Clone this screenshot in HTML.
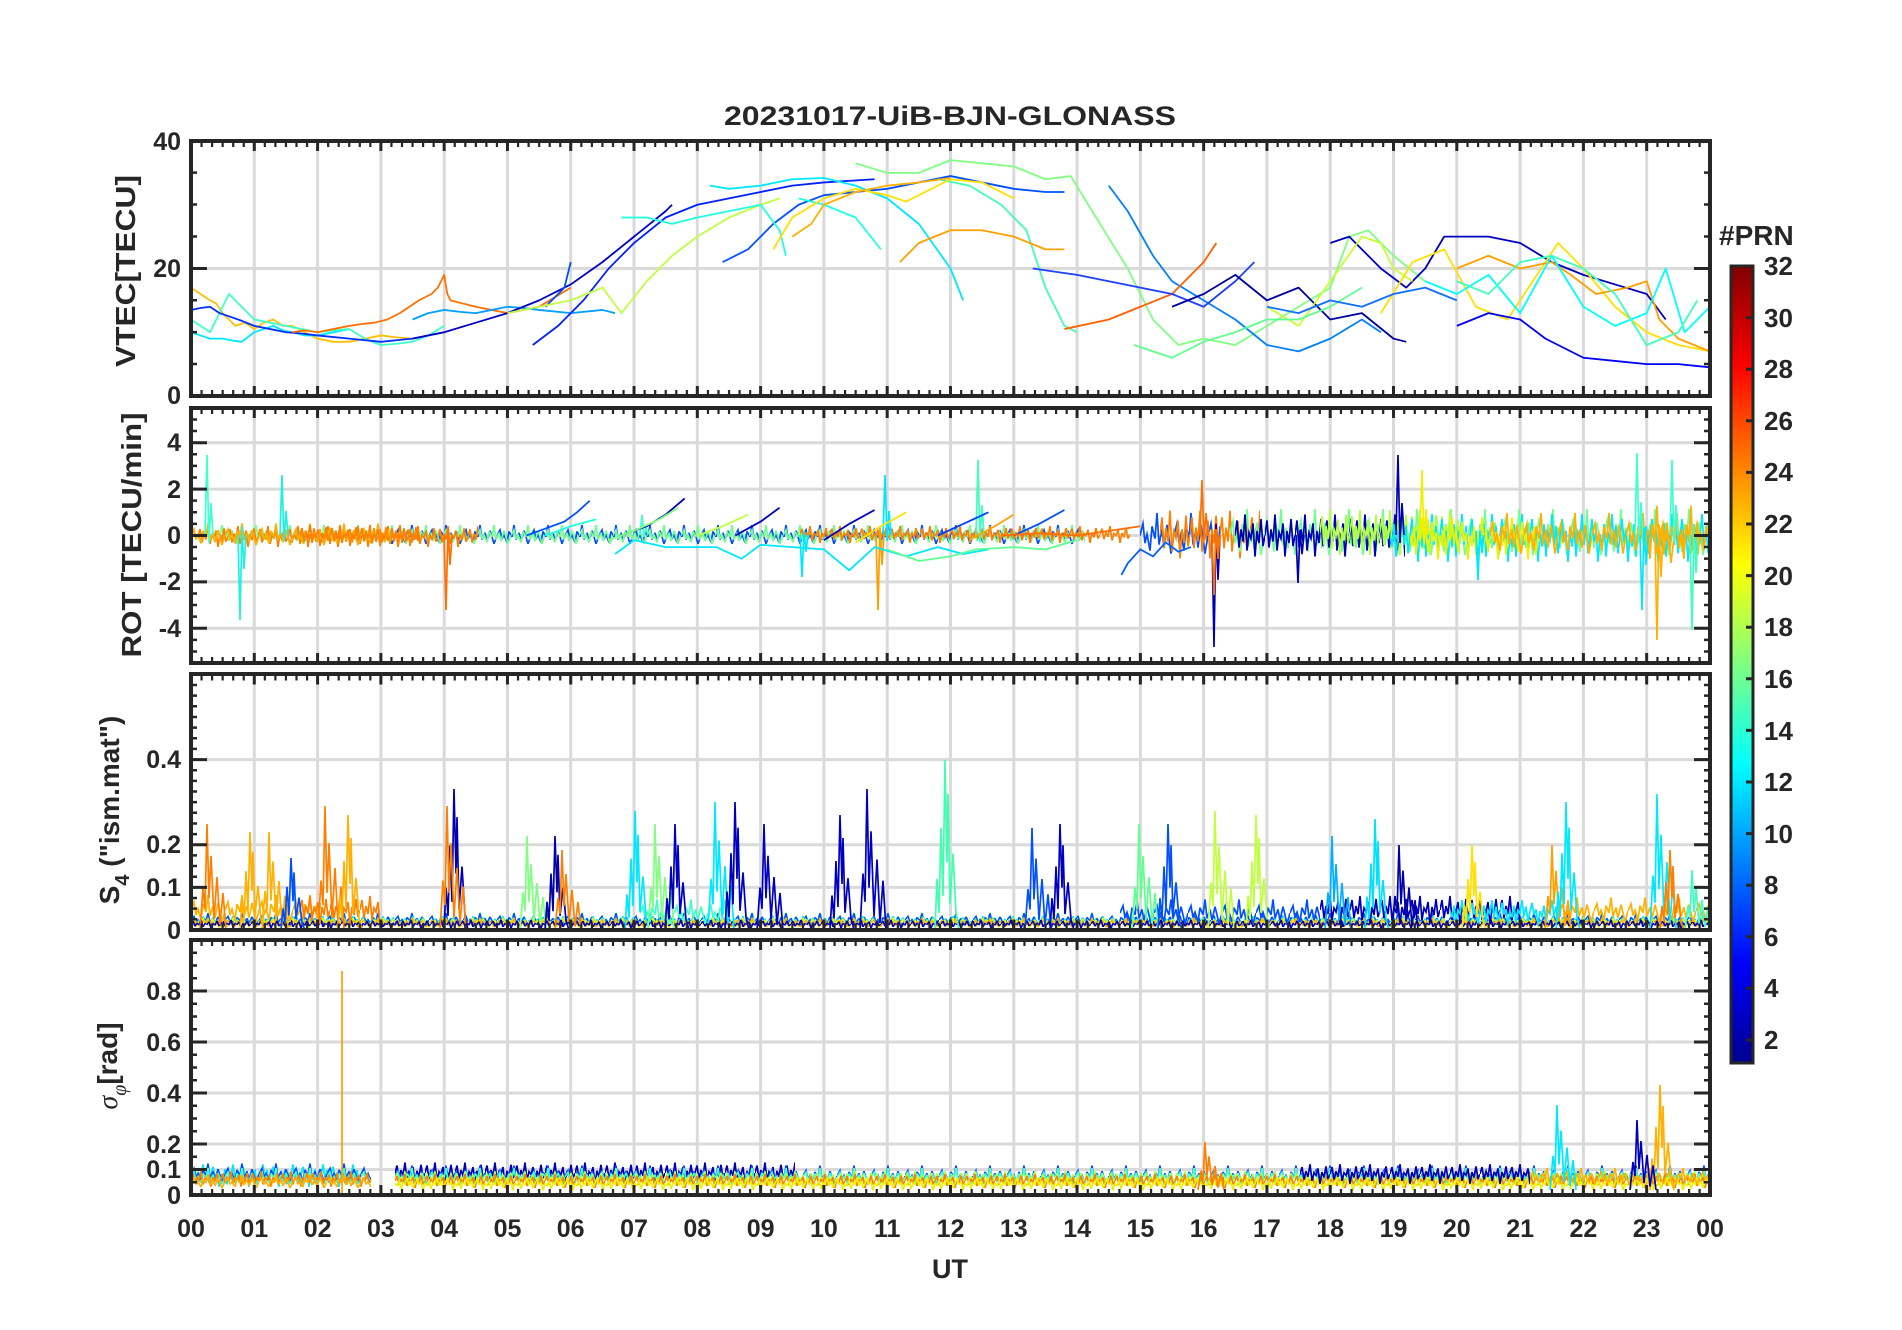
<!DOCTYPE html>
<html><head><meta charset="utf-8"><style>
html,body{margin:0;padding:0;background:#fff;}
svg{display:block;font-family:"Liberation Sans",sans-serif;font-weight:bold;}
</style></head><body>
<svg width="1902" height="1330" viewBox="0 0 1902 1330" xmlns="http://www.w3.org/2000/svg">
<defs>
<linearGradient id="jet" x1="0" y1="1" x2="0" y2="0">
<stop offset="0" stop-color="#00008f"/><stop offset="0.125" stop-color="#0000ff"/><stop offset="0.375" stop-color="#00ffff"/><stop offset="0.625" stop-color="#ffff00"/><stop offset="0.875" stop-color="#ff0000"/><stop offset="1" stop-color="#800000"/>
</linearGradient>
<pattern id="pO" patternUnits="userSpaceOnUse" width="30" height="40"><polyline fill="none" stroke="#ff8000" stroke-width="1.7" points="0,20 2,10 4,28 6,16 8,24 10,6 12,30 14,18 16,22 18,12 20,34 22,17 24,25 26,9 28,27 30,20"/></pattern>
<pattern id="pA" patternUnits="userSpaceOnUse" width="34" height="40"><polyline fill="none" stroke="#ffb000" stroke-width="1.7" points="0,20 3,12 5,25 7,19 10,30 12,14 15,22 17,5 19,26 22,16 24,28 27,13 29,22 31,32 34,20"/></pattern>
<pattern id="pY" patternUnits="userSpaceOnUse" width="30" height="40"><polyline fill="none" stroke="#eef000" stroke-width="1.7" points="0,20 2,27 4,14 6,33 8,19 10,23 12,8 14,26 16,15 18,31 20,21 22,11 24,24 26,18 28,36 30,20"/></pattern>
<pattern id="pG" patternUnits="userSpaceOnUse" width="34" height="40"><polyline fill="none" stroke="#70ff90" stroke-width="1.7" points="0,20 3,12 5,25 7,19 10,30 12,14 15,22 17,5 19,26 22,16 24,28 27,13 29,22 31,32 34,20"/></pattern>
<pattern id="pL" patternUnits="userSpaceOnUse" width="30" height="40"><polyline fill="none" stroke="#b0ff40" stroke-width="1.7" points="0,20 2,10 4,28 6,16 8,24 10,6 12,30 14,18 16,22 18,12 20,34 22,17 24,25 26,9 28,27 30,20"/></pattern>
<pattern id="pC" patternUnits="userSpaceOnUse" width="30" height="40"><polyline fill="none" stroke="#00e8ff" stroke-width="1.7" points="0,20 2,27 4,14 6,33 8,19 10,23 12,8 14,26 16,15 18,31 20,21 22,11 24,24 26,18 28,36 30,20"/></pattern>
<pattern id="pT" patternUnits="userSpaceOnUse" width="34" height="40"><polyline fill="none" stroke="#40ffc8" stroke-width="1.7" points="0,20 3,12 5,25 7,19 10,30 12,14 15,22 17,5 19,26 22,16 24,28 27,13 29,22 31,32 34,20"/></pattern>
<pattern id="pB" patternUnits="userSpaceOnUse" width="34" height="40"><polyline fill="none" stroke="#0050ff" stroke-width="1.7" points="0,20 3,12 5,25 7,19 10,30 12,14 15,22 17,5 19,26 22,16 24,28 27,13 29,22 31,32 34,20"/></pattern>
<pattern id="pD" patternUnits="userSpaceOnUse" width="30" height="40"><polyline fill="none" stroke="#0000b8" stroke-width="1.7" points="0,20 2,10 4,28 6,16 8,24 10,6 12,30 14,18 16,22 18,12 20,34 22,17 24,25 26,9 28,27 30,20"/></pattern>
<polyline id="b1" fill="none" vector-effect="non-scaling-stroke" stroke-width="1.7" points="0,0 3,-0.4 5,-0.2 7,-1 9,-0.3 11,-0.7 14,-0.1 17,-0.5 20,-0.05 23,-0.35 26,0"/>
<polyline id="b2" fill="none" vector-effect="non-scaling-stroke" stroke-width="1.7" points="0,0 2,-0.3 4,-0.1 6,-0.6 8,-0.2 10,-1 12,-0.4 13,-0.8 15,-0.15 18,-0.45 21,-0.1 24,0"/>
<polyline id="sp" fill="none" vector-effect="non-scaling-stroke" stroke-width="1.7" points="0,0 2,-1 4,0.1 6,-0.4 8,0"/>
<clipPath id="c2"><rect x="191" y="408" width="1519" height="255"/></clipPath>
<clipPath id="c3"><rect x="191" y="674" width="1519" height="256"/></clipPath>
<clipPath id="c4"><rect x="191" y="940" width="1519" height="255"/></clipPath>
</defs>

<!-- gridlines -->
<g stroke="#dadada" stroke-width="3">
<g id="vg">
<line x1="254.3" y1="141" x2="254.3" y2="396"/><line x1="317.6" y1="141" x2="317.6" y2="396"/><line x1="380.9" y1="141" x2="380.9" y2="396"/><line x1="444.2" y1="141" x2="444.2" y2="396"/><line x1="507.5" y1="141" x2="507.5" y2="396"/><line x1="570.7" y1="141" x2="570.7" y2="396"/><line x1="634" y1="141" x2="634" y2="396"/><line x1="697.3" y1="141" x2="697.3" y2="396"/><line x1="760.6" y1="141" x2="760.6" y2="396"/><line x1="823.9" y1="141" x2="823.9" y2="396"/><line x1="887.2" y1="141" x2="887.2" y2="396"/><line x1="950.5" y1="141" x2="950.5" y2="396"/><line x1="1013.8" y1="141" x2="1013.8" y2="396"/><line x1="1077.1" y1="141" x2="1077.1" y2="396"/><line x1="1140.4" y1="141" x2="1140.4" y2="396"/><line x1="1203.6" y1="141" x2="1203.6" y2="396"/><line x1="1266.9" y1="141" x2="1266.9" y2="396"/><line x1="1330.2" y1="141" x2="1330.2" y2="396"/><line x1="1393.5" y1="141" x2="1393.5" y2="396"/><line x1="1456.8" y1="141" x2="1456.8" y2="396"/><line x1="1520.1" y1="141" x2="1520.1" y2="396"/><line x1="1583.4" y1="141" x2="1583.4" y2="396"/><line x1="1646.7" y1="141" x2="1646.7" y2="396"/>
</g>
<use href="#vg" transform="translate(0,267)"/>
<use href="#vg" transform="translate(0,533)"/>
<use href="#vg" transform="translate(0,799)"/>
<line x1="191" y1="268.5" x2="1710" y2="268.5"/>
<line x1="191" y1="442.7" x2="1710" y2="442.7"/><line x1="191" y1="489.1" x2="1710" y2="489.1"/><line x1="191" y1="535.5" x2="1710" y2="535.5"/><line x1="191" y1="581.9" x2="1710" y2="581.9"/><line x1="191" y1="628.3" x2="1710" y2="628.3"/>
<line x1="191" y1="887.4" x2="1710" y2="887.4"/><line x1="191" y1="844.8" x2="1710" y2="844.8"/><line x1="191" y1="759.6" x2="1710" y2="759.6"/>
<line x1="191" y1="1169.5" x2="1710" y2="1169.5"/><line x1="191" y1="1144" x2="1710" y2="1144"/><line x1="191" y1="1093" x2="1710" y2="1093"/><line x1="191" y1="1042" x2="1710" y2="1042"/><line x1="191" y1="991" x2="1710" y2="991"/>
</g>

<!-- Panel 1 VTEC -->
<svg x="191" y="141" width="1519" height="255" viewBox="0 -40 24 40" preserveAspectRatio="none" overflow="hidden">
<g fill="none" stroke-width="1.8" stroke-linejoin="round">
<polyline vector-effect="non-scaling-stroke" stroke="#ffc000" points="0,-17 0.15,-16 0.3,-15 0.4,-14.5 0.5,-13 0.6,-12 0.7,-11 0.85,-11.5 1,-10.5 1.15,-11.5 1.3,-12 1.45,-11 1.6,-11 1.8,-10 2,-9 2.25,-8.5 2.5,-8.5 2.75,-9 3,-9.5 3.25,-9.2 3.5,-9"/>
<polyline vector-effect="non-scaling-stroke" stroke="#00e8ff" points="0,-10 0.15,-9.5 0.3,-9 0.5,-9 0.65,-8.7 0.8,-8.5 1,-10 1.15,-10.5 1.3,-11 1.45,-10.3 1.6,-10 1.8,-9.5 2,-9.5 2.25,-10 2.5,-10.5"/>
<polyline vector-effect="non-scaling-stroke" stroke="#40ffc8" points="0,-12 0.15,-11 0.3,-10 0.45,-13 0.6,-16 0.7,-15 0.8,-14 0.9,-13 1,-12 1.25,-11.5 1.5,-11 1.75,-10.5 2,-10 2.25,-10.3 2.5,-10.5 2.75,-9 3,-8 3.25,-8.2 3.5,-8.5 3.75,-9.5 4,-11"/>
<polyline vector-effect="non-scaling-stroke" stroke="#0030ff" points="0,-13.5 0.15,-13.8 0.3,-14 0.45,-13 0.6,-12.5 0.8,-11.8 1,-11 1.25,-10.5 1.5,-10 1.75,-9.8 2,-9.5 2.5,-9 3,-8.5 3.5,-9 4,-10"/>
<polyline vector-effect="non-scaling-stroke" stroke="#ff7000" points="1.6,-10 1.8,-10.3 2,-10 2.25,-10.5 2.5,-11 2.7,-11.3 2.9,-11.5 3.1,-12 3.3,-13 3.45,-14 3.6,-15 3.8,-16 3.9,-17 4,-19 4.05,-16 4.1,-15 4.3,-14.5 4.5,-14 4.75,-13.5 5,-13 5.25,-13.5 5.5,-14 5.75,-15.5 6,-17"/>
<polyline vector-effect="non-scaling-stroke" stroke="#00a0ff" points="3.5,-12 3.75,-13 4,-13.5 4.25,-13.2 4.5,-13 4.75,-13.5 5,-14 5.25,-13.8 5.5,-13.5 6,-13 6.5,-13.5 6.7,-13"/>
<polyline vector-effect="non-scaling-stroke" stroke="#0000c8" points="3.5,-9 4,-10 4.5,-11.5 5,-13 5.5,-15 6,-17.5 6.5,-21 7,-25 7.5,-29 7.6,-30"/>
<polyline vector-effect="non-scaling-stroke" stroke="#0020ff" points="5.4,-8 5.8,-11 6.2,-15 6.6,-20 7,-24 7.5,-28 8,-30 8.5,-31 9,-32 9.5,-33 10,-33.5 10.8,-34"/>
<polyline vector-effect="non-scaling-stroke" stroke="#0050ff" points="5.6,-14 5.9,-17 6,-21"/>
<polyline vector-effect="non-scaling-stroke" stroke="#c0ff40" points="5,-13 5.5,-14 6,-15 6.5,-17 6.8,-13 7.2,-18 7.6,-22 8,-25 8.5,-28 9,-30 9.3,-31"/>
<polyline vector-effect="non-scaling-stroke" stroke="#0050ff" points="8.4,-21 8.8,-23 9.2,-27 9.6,-30 10,-31.5 10.5,-32 11,-32.5 11.5,-33.5 12,-34.5 12.5,-33.5 13,-32.5 13.5,-32 13.8,-32"/>
<polyline vector-effect="non-scaling-stroke" stroke="#00e8ff" points="8.2,-33 8.5,-32.5 9,-33 9.5,-34 10,-34.2 10.5,-33 11,-31 11.5,-27 12,-20 12.2,-15"/>
<polyline vector-effect="non-scaling-stroke" stroke="#20ffe0" points="6.8,-28 7.2,-28 7.6,-27 8,-28 8.5,-29 9,-30 9.3,-26 9.4,-22"/>
<polyline vector-effect="non-scaling-stroke" stroke="#20ffe0" points="9.6,-31 10,-30 10.5,-28 10.9,-23"/>
<polyline vector-effect="non-scaling-stroke" stroke="#80ff80" points="10.5,-36.5 11,-35 11.5,-35 12,-37 12.5,-36.5 13,-36 13.5,-34 13.9,-34.5 14.3,-28 14.8,-20 15.2,-12 15.6,-8 16,-9 16.5,-8 17,-11 17.5,-14 18,-17 18.3,-25 18.6,-26 19,-22 19.5,-18"/>
<polyline vector-effect="non-scaling-stroke" stroke="#40ffb0" points="11.8,-34 12.3,-33 12.8,-30 13.2,-26 13.5,-17 13.8,-11 14,-10"/>
<polyline vector-effect="non-scaling-stroke" stroke="#ffa000" points="11.2,-21 11.5,-24 12,-26 12.5,-26 13,-25 13.5,-23 13.8,-23"/>
<polyline vector-effect="non-scaling-stroke" stroke="#ffe000" points="9.2,-23 9.5,-28 10,-31 10.5,-32.5 11,-31.5 11.3,-30.5 11.8,-33 12,-34 12.5,-33.5 13,-31"/>
<polyline vector-effect="non-scaling-stroke" stroke="#ffb000" points="9.5,-25 9.8,-27 10,-30 10.5,-32 11,-33 11.5,-33.5 12,-34.2"/>
<polyline vector-effect="non-scaling-stroke" stroke="#0080ff" points="14.5,-33 14.8,-29 15.2,-22 15.5,-18 16,-15 16.5,-12 17,-8 17.5,-7 18,-9 18.5,-12 18.8,-10"/>
<polyline vector-effect="non-scaling-stroke" stroke="#ff6000" points="13.8,-10.5 14.5,-12 15,-14 15.5,-16 16,-21 16.2,-24"/>
<polyline vector-effect="non-scaling-stroke" stroke="#2040ff" points="13.3,-20 14,-19 14.5,-18 15,-17 15.5,-16 16,-14 16.5,-18 16.8,-21"/>
<polyline vector-effect="non-scaling-stroke" stroke="#0000a0" points="15.5,-14 16,-16 16.5,-19 17,-15 17.5,-17 18,-12 18.5,-13 19,-9 19.2,-8.5"/>
<polyline vector-effect="non-scaling-stroke" stroke="#0000c0" points="18,-24 18.3,-25 18.8,-20 19.2,-17 19.5,-20 19.8,-25 20.5,-25 21,-24 21.5,-21 22,-19 22.5,-17.5 23,-16 23.3,-12"/>
<polyline vector-effect="non-scaling-stroke" stroke="#c8ff30" points="17,-14 17.5,-11 18,-18 18.5,-25 18.8,-24 19,-20 19.3,-18"/>
<polyline vector-effect="non-scaling-stroke" stroke="#ffe000" points="18.8,-13 19.3,-21 19.8,-23 20.3,-14 20.8,-12 21.2,-18 21.6,-24 22,-20 22.5,-14 23,-10 23.5,-8 24,-7"/>
<polyline vector-effect="non-scaling-stroke" stroke="#ffa000" points="20,-20 20.5,-22 21,-20 21.5,-21 21.8,-19 22.2,-16 22.7,-17 23,-18 23.2,-12 23.5,-9 24,-7"/>
<polyline vector-effect="non-scaling-stroke" stroke="#00ffff" points="19.5,-18 20,-16 20.5,-19 21,-13 21.5,-22 22,-14 22.5,-11 23,-13 23.3,-20 23.6,-10 24,-14"/>
<polyline vector-effect="non-scaling-stroke" stroke="#40ffc0" points="20,-18 20.5,-16 21,-21 21.5,-22 22,-20 22.5,-16 23,-8 23.5,-10 23.8,-15"/>
<polyline vector-effect="non-scaling-stroke" stroke="#0000ff" points="20,-11 20.5,-13 21,-12 21.4,-9 22,-6 22.5,-5.5 23,-5 23.5,-5 24,-4.5"/>
<polyline vector-effect="non-scaling-stroke" stroke="#60ff90" points="14.9,-8 15.5,-6 16,-8.5 16.5,-10 17,-12 17.5,-12 18,-14 18.5,-17"/>
<polyline vector-effect="non-scaling-stroke" stroke="#1070ff" points="17,-14 17.5,-13 18,-15 18.5,-14 19,-16 19.5,-17 20,-15"/>
</g>
</svg>

<!-- Panel 2 ROT -->
<g clip-path="url(#c2)">
<g transform="translate(191,521.5) scale(1,0.7)"><rect width="890" height="40" fill="url(#pB)"/></g>
<g transform="translate(205,521.5) scale(1,0.7)"><rect width="880" height="40" fill="url(#pG)"/></g>
<g transform="translate(198,521.5) scale(1,0.75)"><rect width="280" height="40" fill="url(#pO)"/></g>
<g transform="translate(191,519.5) scale(1,0.8)"><rect width="200" height="40" fill="url(#pA)"/></g>
<g transform="translate(300,520.5) scale(1,0.75)"><rect width="120" height="40" fill="url(#pO)"/></g>
<g transform="translate(800,522.5) scale(1,0.6)"><rect width="330" height="40" fill="url(#pO)"/></g>
<g transform="translate(1140,505.5) scale(1,1.5)"><rect width="80" height="40" fill="url(#pB)"/></g>
<g transform="translate(1160,500.5) scale(1,1.7)"><rect width="100" height="40" fill="url(#pO)"/></g>
<g transform="translate(1230,500.5) scale(1,1.7)"><rect width="500" height="40" fill="url(#pG)"/></g>
<g transform="translate(1235,505.5) scale(1,1.5)"><rect width="170" height="40" fill="url(#pD)"/></g>
<g transform="translate(1320,500.5) scale(1,1.6)"><rect width="140" height="40" fill="url(#pL)"/></g>
<g transform="translate(1390,500.5) scale(1,1.7)"><rect width="330" height="40" fill="url(#pC)"/></g>
<g transform="translate(1410,505.5) scale(1,1.5)"><rect width="130" height="40" fill="url(#pY)"/></g>
<g transform="translate(1490,505.5) scale(1,1.5)"><rect width="230" height="40" fill="url(#pA)"/></g>
<g transform="translate(1640,495.5) scale(1,2.1)"><rect width="60" height="40" fill="url(#pA)"/></g>
<use href="#sp" transform="translate(205,535) scale(1,80)" stroke="#40ffd0"/>
<use href="#sp" transform="translate(238,535) scale(1,-85)" stroke="#20f0e0"/>
<use href="#sp" transform="translate(280,535) scale(1,60)" stroke="#20f0e0"/>
<use href="#sp" transform="translate(640,535) scale(1,20)" stroke="#40ffd0"/>
<use href="#sp" transform="translate(444,535) scale(1,-75)" stroke="#ff7000"/>
<use href="#sp" transform="translate(876,535) scale(1,-75)" stroke="#ffa000"/>
<use href="#sp" transform="translate(883,535) scale(1,60)" stroke="#00e8ff"/>
<use href="#sp" transform="translate(976,535) scale(1,75)" stroke="#40ffc0"/>
<use href="#sp" transform="translate(800,535) scale(1,-42)" stroke="#00e8ff"/>
<use href="#sp" transform="translate(1212,535) scale(1,-112)" stroke="#0000b0"/>
<use href="#sp" transform="translate(1212,535) scale(1,-60)" stroke="#ff7000"/>
<use href="#sp" transform="translate(1200,535) scale(1,55)" stroke="#ff7000"/>
<use href="#sp" transform="translate(1396,535) scale(1,80)" stroke="#0000b0"/>
<use href="#sp" transform="translate(1420,535) scale(1,65)" stroke="#eef000"/>
<use href="#sp" transform="translate(1296,535) scale(1,-48)" stroke="#0000b0"/>
<use href="#sp" transform="translate(1476,535) scale(1,-45)" stroke="#00e8ff"/>
<use href="#sp" transform="translate(1635,535) scale(1,82)" stroke="#40ffd0"/>
<use href="#sp" transform="translate(1655,535) scale(1,-105)" stroke="#ffb000"/>
<use href="#sp" transform="translate(1670,535) scale(1,75)" stroke="#40ffd0"/>
<use href="#sp" transform="translate(1690,535) scale(1,-95)" stroke="#40ffc0"/>
<use href="#sp" transform="translate(1640,535) scale(1,-75)" stroke="#00e8ff"/>
</g>
<svg x="191" y="408" width="1519" height="255" viewBox="0 -5.5 24 11" preserveAspectRatio="none" overflow="hidden">
<g fill="none" stroke-width="1.8">
<polyline vector-effect="non-scaling-stroke" stroke="#0050ff" points="5.3,0 5.6,-0.3 5.9,-0.6 6.1,-1 6.3,-1.5"/>
<polyline vector-effect="non-scaling-stroke" stroke="#20ffe0" points="5.6,0 6,-0.4 6.4,-0.7"/>
<polyline vector-effect="non-scaling-stroke" stroke="#0000c0" points="6.8,0 7.2,-0.4 7.5,-0.9 7.8,-1.6"/>
<polyline vector-effect="non-scaling-stroke" stroke="#80ff80" points="6.6,0.2 7,-0.2 7.4,-0.7 7.7,-1.2"/>
<polyline vector-effect="non-scaling-stroke" stroke="#c0ff40" points="8,0 8.4,-0.4 8.8,-0.9"/>
<polyline vector-effect="non-scaling-stroke" stroke="#0000c0" points="8.6,0 9,-0.6 9.3,-1.2"/>
<polyline vector-effect="non-scaling-stroke" stroke="#0000c0" points="10,0.2 10.4,-0.5 10.8,-1.1"/>
<polyline vector-effect="non-scaling-stroke" stroke="#ffe000" points="10.5,0.3 10.9,-0.4 11.3,-1"/>
<polyline vector-effect="non-scaling-stroke" stroke="#0040ff" points="11.8,0 12.2,-0.5 12.6,-1"/>
<polyline vector-effect="non-scaling-stroke" stroke="#ffa000" points="12.3,0.2 12.7,-0.4 13,-0.9"/>
<polyline vector-effect="non-scaling-stroke" stroke="#0050ff" points="13,0 13.4,-0.5 13.8,-1.1"/>
<polyline vector-effect="non-scaling-stroke" stroke="#ff7000" points="12.8,0 13.4,-0.1 14,0 14.5,-0.2 15,-0.4"/>
<polyline vector-effect="non-scaling-stroke" stroke="#0060ff" points="14.7,1.7 14.8,1.2 15,0.6 15.2,0.9 15.4,0.3 15.6,0.7 15.8,0.5"/>
<polyline vector-effect="non-scaling-stroke" stroke="#00e8ff" points="6.7,0.8 7,0.2 7.5,0.5 8.3,0.5 8.7,1 9,0.4 9.5,0.5 10,0.6 10.4,1.5 10.8,0.5 11.3,0.9 11.8,0.5 12.2,0.8 12.6,0.6"/>
<polyline vector-effect="non-scaling-stroke" stroke="#60ff90" points="11,0.6 11.5,1.1 12,0.9 12.4,0.6 13,0.5 13.5,0.6 14,0.2"/>
</g>
</svg>

<!-- Panel 3 S4 -->
<g clip-path="url(#c3)">
<g transform="translate(191,910) scale(1,0.5)"><rect width="1519" height="40" fill="url(#pG)"/></g>
<g transform="translate(191,911) scale(1,0.45)"><rect width="1519" height="40" fill="url(#pB)"/></g>
<g transform="translate(191,913) scale(1,0.4)"><rect width="1519" height="40" fill="url(#pC)"/></g>
<g transform="translate(191,915) scale(1,0.35)"><rect width="1519" height="40" fill="url(#pY)"/></g>
<g transform="translate(191,916) scale(1,0.35)"><rect width="1519" height="40" fill="url(#pA)"/></g>
<g transform="translate(191,918) scale(1,0.3)"><rect width="1519" height="40" fill="url(#pD)"/></g>
<g transform="translate(191,890) scale(1,1)"><rect width="130" height="40" fill="url(#pA)"/></g>
<g transform="translate(300,890) scale(1,1)"><rect width="80" height="40" fill="url(#pO)"/></g>
<g transform="translate(640,895) scale(1,0.9)"><rect width="90" height="40" fill="url(#pT)"/></g>
<g transform="translate(1120,895) scale(1,0.9)"><rect width="200" height="40" fill="url(#pB)"/></g>
<g transform="translate(1320,890) scale(1,1)"><rect width="200" height="40" fill="url(#pD)"/></g>
<g transform="translate(1560,893) scale(1,0.9)"><rect width="150" height="40" fill="url(#pA)"/></g>
<g transform="translate(1450,893) scale(1,0.9)"><rect width="110" height="40" fill="url(#pC)"/></g>
<use href="#b1" transform="translate(200,930) scale(1,106)" stroke="#ff8000"/>
<use href="#b2" transform="translate(240,930) scale(1,98)" stroke="#ffb000"/>
<use href="#b1" transform="translate(262,930) scale(1,98)" stroke="#ffb000"/>
<use href="#b2" transform="translate(281,930) scale(1,72)" stroke="#0050ff"/>
<use href="#b1" transform="translate(318,930) scale(1,124)" stroke="#ff8000"/>
<use href="#b2" transform="translate(338,930) scale(1,115)" stroke="#ffb000"/>
<use href="#b2" transform="translate(444,930) scale(1,141)" stroke="#0000b0"/>
<use href="#b1" transform="translate(440,930) scale(1,124)" stroke="#ff8000"/>
<use href="#b1" transform="translate(520,930) scale(1,94)" stroke="#80ff80"/>
<use href="#b2" transform="translate(545,930) scale(1,94)" stroke="#0000b0"/>
<use href="#b1" transform="translate(555,930) scale(1,80)" stroke="#ff8000"/>
<use href="#b2" transform="translate(625,930) scale(1,119)" stroke="#00e8ff"/>
<use href="#b1" transform="translate(648,930) scale(1,106)" stroke="#80ff80"/>
<use href="#b2" transform="translate(665,930) scale(1,106)" stroke="#0000c0"/>
<use href="#b1" transform="translate(708,930) scale(1,128)" stroke="#00e8ff"/>
<use href="#b2" transform="translate(725,930) scale(1,128)" stroke="#0000c0"/>
<use href="#b1" transform="translate(757,930) scale(1,106)" stroke="#0000c0"/>
<use href="#b2" transform="translate(830,930) scale(1,115)" stroke="#0000c0"/>
<use href="#b1" transform="translate(860,930) scale(1,141)" stroke="#0000c0"/>
<use href="#b2" transform="translate(935,930) scale(1,170)" stroke="#40ffb0"/>
<use href="#b1" transform="translate(1025,930) scale(1,102)" stroke="#0050ff"/>
<use href="#b2" transform="translate(1050,930) scale(1,106)" stroke="#0000c0"/>
<use href="#b1" transform="translate(1132,930) scale(1,106)" stroke="#60ff90"/>
<use href="#b2" transform="translate(1158,930) scale(1,106)" stroke="#0050ff"/>
<use href="#b1" transform="translate(1208,930) scale(1,119)" stroke="#c0ff40"/>
<use href="#b2" transform="translate(1246,930) scale(1,115)" stroke="#c0ff40"/>
<use href="#b1" transform="translate(1325,930) scale(1,94)" stroke="#00b0ff"/>
<use href="#b2" transform="translate(1365,930) scale(1,111)" stroke="#00e0ff"/>
<use href="#b1" transform="translate(1392,930) scale(1,85)" stroke="#0000b0"/>
<use href="#b2" transform="translate(1462,930) scale(1,85)" stroke="#ffe000"/>
<use href="#b1" transform="translate(1545,930) scale(1,85)" stroke="#ffa000"/>
<use href="#b2" transform="translate(1556,930) scale(1,128)" stroke="#00e8ff"/>
<use href="#b1" transform="translate(1650,930) scale(1,136)" stroke="#00e8ff"/>
<use href="#b2" transform="translate(1660,930) scale(1,80)" stroke="#ff8000"/>
<use href="#b1" transform="translate(1685,930) scale(1,60)" stroke="#40ffc0"/>
</g>

<!-- Panel 4 sigma -->
<g clip-path="url(#c4)">
<g transform="translate(191,1158) scale(1,0.8)"><rect width="170" height="40" fill="url(#pC)"/></g>
<g transform="translate(191,1160) scale(1,0.7)"><rect width="180" height="40" fill="url(#pB)"/></g>
<g transform="translate(191,1165) scale(1,0.6)"><rect width="180" height="40" fill="url(#pT)"/></g>
<g transform="translate(191,1168) scale(1,0.55)"><rect width="180" height="40" fill="url(#pO)"/></g>
<g transform="translate(191,1172) scale(1,0.5)"><rect width="180" height="40" fill="url(#pA)"/></g>
<g transform="translate(395,1158) scale(1,0.75)"><rect width="400" height="40" fill="url(#pD)"/></g>
<g transform="translate(395,1162) scale(1,0.7)"><rect width="1315" height="40" fill="url(#pB)"/></g>
<g transform="translate(395,1165) scale(1,0.6)"><rect width="1315" height="40" fill="url(#pT)"/></g>
<g transform="translate(395,1168) scale(1,0.55)"><rect width="1315" height="40" fill="url(#pL)"/></g>
<g transform="translate(395,1171) scale(1,0.5)"><rect width="1315" height="40" fill="url(#pO)"/></g>
<g transform="translate(395,1174) scale(1,0.45)"><rect width="1315" height="40" fill="url(#pY)"/></g>
<g transform="translate(1300,1160) scale(1,0.7)"><rect width="230" height="40" fill="url(#pD)"/></g>
<g transform="translate(1530,1165) scale(1,0.6)"><rect width="180" height="40" fill="url(#pA)"/></g>
<line x1="342" y1="1194" x2="342" y2="971" stroke="#ffa000" stroke-width="1.7"/>
<use href="#b1" transform="translate(1550,1190) scale(1,85)" stroke="#00e8ff"/>
<use href="#b2" transform="translate(1650,1190) scale(1,105)" stroke="#ffb000"/>
<use href="#b1" transform="translate(1630,1190) scale(1,70)" stroke="#0000c0"/>
<use href="#b1" transform="translate(1198,1190) scale(1,48)" stroke="#ff8000"/>
</g>

<!-- frames -->
<g fill="none" stroke="#262626" stroke-width="4">
<rect x="191" y="141" width="1519" height="255"/>
<rect x="191" y="408" width="1519" height="255"/>
<rect x="191" y="674" width="1519" height="256"/>
<rect x="191" y="940" width="1519" height="255"/>
</g>
<!-- x ticks -->
<g stroke="#262626" fill="none">
<g id="xt">
<line x1="189.5" y1="146" x2="1712" y2="146" stroke-width="10" stroke-dasharray="3 60.29"/>
<line x1="189.5" y1="391" x2="1712" y2="391" stroke-width="10" stroke-dasharray="3 60.29"/>
<line x1="189.9" y1="144" x2="1712" y2="144" stroke-width="6" stroke-dasharray="2.2 8.35"/>
<line x1="189.9" y1="393" x2="1712" y2="393" stroke-width="6" stroke-dasharray="2.2 8.35"/>
</g>
<use href="#xt" transform="translate(0,267)"/>
<use href="#xt" transform="translate(0,533.5)"/>
<use href="#xt" transform="translate(0,799)"/>
<!-- y minor ticks -->
<line x1="194" y1="397.2" x2="194" y2="141" stroke-width="6" stroke-dasharray="2.5 29.4"/>
<line x1="1707" y1="397.2" x2="1707" y2="141" stroke-width="6" stroke-dasharray="2.5 29.4"/>
<line x1="194" y1="664.3" x2="194" y2="408" stroke-width="6" stroke-dasharray="2.5 9.1"/>
<line x1="1707" y1="664.3" x2="1707" y2="408" stroke-width="6" stroke-dasharray="2.5 9.1"/>
<line x1="194" y1="931.2" x2="194" y2="674" stroke-width="6" stroke-dasharray="2.5 8.15"/>
<line x1="1707" y1="931.2" x2="1707" y2="674" stroke-width="6" stroke-dasharray="2.5 8.15"/>
<line x1="194" y1="1196.2" x2="194" y2="940" stroke-width="6" stroke-dasharray="2.5 10.25"/>
<line x1="1707" y1="1196.2" x2="1707" y2="940" stroke-width="6" stroke-dasharray="2.5 10.25"/>
<!-- y major ticks -->
<g stroke-width="3">
<path d="M191 268.5h16M1710 268.5h-16M191 442.7h16M1710 442.7h-16M191 489.1h16M1710 489.1h-16M191 535.5h16M1710 535.5h-16M191 581.9h16M1710 581.9h-16M191 628.3h16M1710 628.3h-16M191 887.4h16M1710 887.4h-16M191 844.8h16M1710 844.8h-16M191 759.6h16M1710 759.6h-16M191 1169.5h16M1710 1169.5h-16M191 1144h16M1710 1144h-16M191 1093h16M1710 1093h-16M191 1042h16M1710 1042h-16M191 991h16M1710 991h-16"/>
</g>
</g>

<!-- tick labels -->
<g fill="#262626" font-size="25" text-anchor="end">
<text x="181" y="150">40</text><text x="181" y="277">20</text><text x="181" y="404">0</text>
<text x="181" y="451">4</text><text x="181" y="498">2</text><text x="181" y="544">0</text><text x="181" y="590">-2</text><text x="181" y="637">-4</text>
<text x="181" y="768">0.4</text><text x="181" y="853">0.2</text><text x="181" y="896">0.1</text><text x="181" y="939">0</text>
<text x="181" y="1000">0.8</text><text x="181" y="1051">0.6</text><text x="181" y="1102">0.4</text><text x="181" y="1153">0.2</text><text x="181" y="1178">0.1</text><text x="181" y="1204">0</text>
</g>
<g fill="#262626" font-size="25" text-anchor="middle">
<text x="191" y="1237">00</text><text x="254.3" y="1237">01</text><text x="317.6" y="1237">02</text><text x="380.9" y="1237">03</text><text x="444.2" y="1237">04</text><text x="507.5" y="1237">05</text><text x="570.7" y="1237">06</text><text x="634" y="1237">07</text><text x="697.3" y="1237">08</text><text x="760.6" y="1237">09</text><text x="823.9" y="1237">10</text><text x="887.2" y="1237">11</text><text x="950.5" y="1237">12</text><text x="1013.8" y="1237">13</text><text x="1077.1" y="1237">14</text><text x="1140.4" y="1237">15</text><text x="1203.6" y="1237">16</text><text x="1266.9" y="1237">17</text><text x="1330.2" y="1237">18</text><text x="1393.5" y="1237">19</text><text x="1456.8" y="1237">20</text><text x="1520.1" y="1237">21</text><text x="1583.4" y="1237">22</text><text x="1646.7" y="1237">23</text><text x="1710" y="1237">00</text>
<text x="950" y="1278" font-size="27">UT</text>
<text x="950" y="125" font-size="27" textLength="452" lengthAdjust="spacingAndGlyphs">20231017-UiB-BJN-GLONASS</text>
</g>

<!-- axis labels -->
<g fill="#262626" font-size="28" text-anchor="middle">
<text transform="translate(135,271) rotate(-90)" textLength="192" lengthAdjust="spacingAndGlyphs">VTEC[TECU]</text>
<text transform="translate(141,535) rotate(-90)" textLength="245" lengthAdjust="spacingAndGlyphs">ROT [TECU/min]</text>
<text transform="translate(119,810) rotate(-90)">S<tspan font-size="20" dy="10">4</tspan><tspan dy="-10"> ("ism.mat")</tspan></text>
<text transform="translate(117,1066) rotate(-90)"><tspan font-family="Liberation Serif" font-style="italic" font-weight="normal">σ</tspan><tspan font-family="Liberation Serif" font-style="italic" font-weight="normal" font-size="20" dy="9">φ</tspan><tspan dy="-9">[rad]</tspan></text>
</g>

<!-- colorbar -->
<rect x="1731" y="266" width="22" height="797" fill="url(#jet)" stroke="#262626" stroke-width="3"/>
<g stroke="#262626" stroke-width="3">
<path d="M1753 317.6h-7M1753 369.2h-7M1753 420.8h-7M1753 472.4h-7M1753 524h-7M1753 575.6h-7M1753 627.2h-7M1753 678.8h-7M1753 730.4h-7M1753 782h-7M1753 833.6h-7M1753 885.2h-7M1753 936.8h-7M1753 988.4h-7M1753 1040h-7"/>
</g>
<g fill="#262626" font-size="26">
<text x="1764" y="275">32</text><text x="1764" y="327">30</text><text x="1764" y="378">28</text><text x="1764" y="430">26</text><text x="1764" y="481">24</text><text x="1764" y="533">22</text><text x="1764" y="585">20</text><text x="1764" y="636">18</text><text x="1764" y="688">16</text><text x="1764" y="740">14</text><text x="1764" y="791">12</text><text x="1764" y="843">10</text><text x="1764" y="894">8</text><text x="1764" y="946">6</text><text x="1764" y="997">4</text><text x="1764" y="1049">2</text>
<text x="1719" y="245" font-size="28">#PRN</text>
</g>
</svg>
</body></html>
